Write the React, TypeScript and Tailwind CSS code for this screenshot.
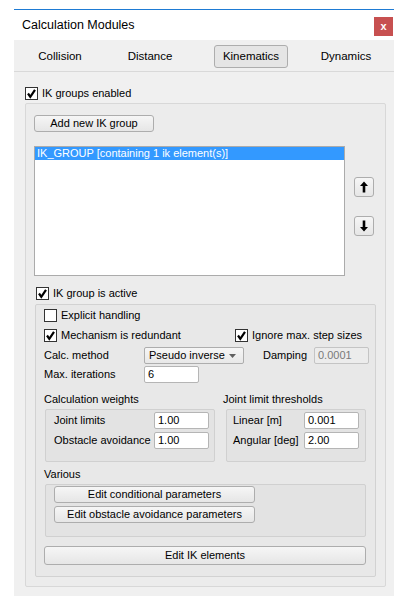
import React from 'react';

const font = { fontFamily: '"Liberation Sans", Arial, sans-serif' };

function Check({ checked }: { checked: boolean }) {
  return (
    <span className="flex h-[13px] w-[13px] shrink-0 items-center justify-center border border-[#333] bg-white">
      {checked && (
        <svg width="11" height="11" viewBox="0 0 11 11">
          <path d="M2 5.5 L4.3 8.8 L9 1.8" fill="none" stroke="#000" strokeWidth="2.2" />
        </svg>
      )}
    </span>
  );
}

function CheckRow({ checked, label }: { checked: boolean; label: string }) {
  return (
    <div className="flex h-[13px] items-center gap-[4px]">
      <Check checked={checked} />
      <span className="leading-none">{label}</span>
    </div>
  );
}

function Btn({ className, children }: { className: string; children: React.ReactNode }) {
  return (
    <div
      className={`flex items-center justify-center rounded-[3px] border border-[#adadad] bg-gradient-to-b from-[#f6f6f6] to-[#e6e6e6] leading-none ${className}`}
    >
      {children}
    </div>
  );
}

function Input({ value, className = '', disabled = false }: { value: string; className?: string; disabled?: boolean }) {
  return (
    <div
      className={`flex h-[17px] w-[55px] items-center rounded-[2px] border pl-[3px] leading-none ${
        disabled ? 'border-[#c4c4c4] bg-[#ececec] text-[#7a7a7a]' : 'border-[#b5b5b5] bg-white'
      } ${className}`}
    >
      {value}
    </div>
  );
}

export default function App() {
  return (
    <div className="h-[597px] w-[416px] bg-white pt-[9px] text-[11px] text-black" style={font}>
      <div className="ml-[14px] w-[380px] border-t border-[#1e7bd4] bg-[#f0f0f0] pb-[9px]">
        {/* Title bar */}
        <div className="flex h-[30px] items-center justify-between bg-white pl-[8px] pr-[1px]">
          <span className="text-[12.5px]">Calculation Modules</span>
          <div className="mt-[2px] flex h-[19px] w-[19px] items-center justify-center bg-[#c75050] text-[11px] font-bold leading-none text-white">
            x
          </div>
        </div>

        {/* Tabs */}
        <div className="flex h-[32px] items-center border-b border-[#d9d9d9] pt-[2px] text-[11.5px]">
          <div className="ml-[9px] flex h-[23px] w-[74px] items-center justify-center">Collision</div>
          <div className="ml-[16px] flex h-[23px] w-[74px] items-center justify-center">Distance</div>
          <div className="ml-[27px] flex h-[23px] w-[74px] items-center justify-center rounded-[3px] border border-[#adadad] bg-[#e5e5e5]">
            Kinematics
          </div>
          <div className="ml-[21px] flex h-[23px] w-[74px] items-center justify-center">Dynamics</div>
        </div>

        {/* Body */}
        <div className="pl-[11px] pt-[15px]">
          <CheckRow checked label="IK groups enabled" />

          <div className="mt-[3px] w-[361px] rounded-[2px] border border-[#d8d8d8] bg-[#ececec] pb-[9px] pl-[8px]">
            <Btn className="mt-[11px] h-[17px] w-[120px]">Add new IK group</Btn>

            <div className="mt-[14px] flex items-center">
              <div className="h-[130px] w-[311px] border border-[#ababab] bg-white">
                <div className="flex h-[13px] items-center bg-[#3399ff] pl-[2px] leading-none text-white">
                  IK_GROUP [containing 1 ik element(s)]
                </div>
              </div>
              <div className="ml-[9px] mt-[-10px] flex flex-col gap-[19px]">
                <Btn className="h-[20px] w-[20px]">
                  <svg width="10" height="12" viewBox="0 0 10 12">
                    <path d="M5 0.5 L9 5 L6.3 5 L6.3 11.5 L3.7 11.5 L3.7 5 L1 5 Z" fill="#000" />
                  </svg>
                </Btn>
                <Btn className="h-[20px] w-[20px]">
                  <svg width="10" height="12" viewBox="0 0 10 12">
                    <path d="M5 11.5 L9 7 L6.3 7 L6.3 0.5 L3.7 0.5 L3.7 7 L1 7 Z" fill="#000" />
                  </svg>
                </Btn>
              </div>
            </div>

            <div className="ml-[2px] mt-[11px]">
              <CheckRow checked label="IK group is active" />
            </div>

            {/* Inner group */}
            <div className="ml-[1px] mt-[4px] w-[341px] rounded-[2px] border border-[#d2d2d2] bg-[#e8e8e8] pb-[11px] pl-[8px]">
              <div className="mt-[4px]">
                <CheckRow checked={false} label="Explicit handling" />
              </div>
              <div className="mt-[7px] flex">
                <div className="w-[191px]">
                  <CheckRow checked label="Mechanism is redundant" />
                </div>
                <CheckRow checked label="Ignore max. step sizes" />
              </div>

              <div className="mt-[5px] flex h-[17px] items-center">
                <span className="w-[100px]">Calc. method</span>
                <div className="flex h-[17px] w-[100px] items-center justify-between rounded-[2px] border border-[#adadad] bg-gradient-to-b from-[#f6f6f6] to-[#e8e8e8] pl-[4px] pr-[7px] leading-none">
                  <span>Pseudo inverse</span>
                  <svg width="7" height="4" viewBox="0 0 7 4">
                    <path d="M0 0 L7 0 L3.5 4 Z" fill="#606060" />
                  </svg>
                </div>
                <span className="ml-[19px] w-[51px]">Damping</span>
                <Input value="0.0001" disabled />
              </div>

              <div className="mt-[2px] flex h-[17px] items-center">
                <span className="w-[100px]">Max. iterations</span>
                <Input value="6" />
              </div>

              <div className="mt-[9px] flex h-[14px] items-center">
                <span className="w-[179px]">Calculation weights</span>
                <span>Joint limit thresholds</span>
              </div>

              <div className="mt-[3px] flex">
                <div className="ml-[1px] h-[53px] w-[170px] rounded-[2px] border border-[#d0d0d0] bg-[#e3e3e3] pl-[8px] pt-[2px]">
                  <div className="flex h-[17px] items-center">
                    <span className="w-[100px]">Joint limits</span>
                    <Input value="1.00" />
                  </div>
                  <div className="mt-[3px] flex h-[17px] items-center">
                    <span className="w-[100px]">Obstacle avoidance</span>
                    <Input value="1.00" />
                  </div>
                </div>
                <div className="ml-[11px] h-[53px] w-[140px] rounded-[2px] border border-[#d0d0d0] bg-[#e3e3e3] pl-[6px] pt-[2px]">
                  <div className="flex h-[17px] items-center">
                    <span className="w-[71px]">Linear [m]</span>
                    <Input value="0.001" />
                  </div>
                  <div className="mt-[3px] flex h-[17px] items-center">
                    <span className="w-[71px]">Angular [deg]</span>
                    <Input value="2.00" />
                  </div>
                </div>
              </div>

              <div className="mt-[5px] flex h-[14px] items-center">Various</div>

              <div className="ml-[1px] mt-[3px] h-[53px] w-[321px] rounded-[2px] border border-[#d0d0d0] bg-[#e3e3e3] pl-[8px] pt-[1px]">
                <Btn className="h-[17px] w-[201px]">Edit conditional parameters</Btn>
                <Btn className="mt-[3px] h-[17px] w-[201px]">Edit obstacle avoidance parameters</Btn>
              </div>

              <Btn className="mt-[9px] h-[19px] w-[322px]">Edit IK elements</Btn>
            </div>
          </div>
        </div>
      </div>
    </div>
  );
}
